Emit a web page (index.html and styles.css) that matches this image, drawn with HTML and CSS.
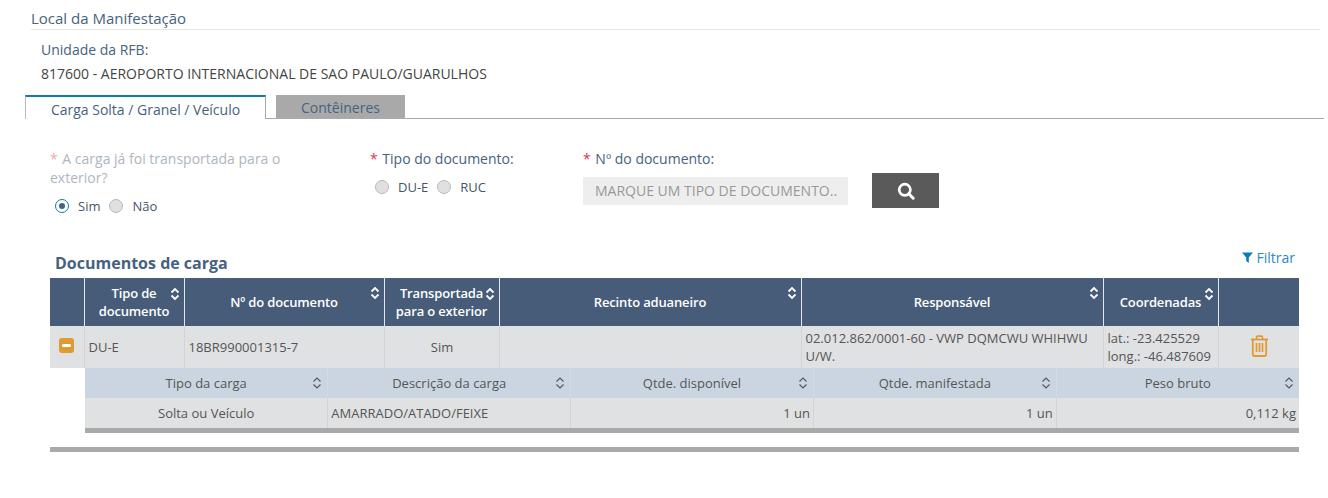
FILE: index.html
```html
<!DOCTYPE html>
<html lang="pt-BR">
<head>
<meta charset="utf-8">
<title>Local da Manifestação</title>
<link rel="stylesheet" href="styles.css">
</head>
<body>
<main class="page">
  <header class="section-title"><h2>Local da Manifestação</h2></header>
  <div class="unit">
    <div class="unit-label">Unidade da RFB:</div>
    <div class="unit-value">817600 - AEROPORTO INTERNACIONAL DE SAO PAULO/GUARULHOS</div>
  </div>
  <nav class="tabs">
    <span class="tab tab-active">Carga Solta / Granel / Veículo</span>
    <span class="tab tab-idle">Contêineres</span>
  </nav>
  <form class="form-row">
    <div class="field field-carga">
      <div class="label label-muted"><span class="req req-muted">*</span> A carga já foi transportada para o exterior?</div>
      <div class="radios radios-carga">
        <span class="radio radio-on"></span><span class="radio-text">Sim</span>
        <span class="radio"></span><span class="radio-text">Não</span>
      </div>
    </div>
    <div class="field field-tipo">
      <div class="label"><span class="req">*</span> Tipo do documento:</div>
      <div class="radios radios-tipo">
        <span class="radio"></span><span class="radio-text">DU-E</span>
        <span class="radio"></span><span class="radio-text">RUC</span>
      </div>
    </div>
    <div class="field field-num">
      <div class="label"><span class="req">*</span> Nº do documento:</div>
      <div class="fake-input">MARQUE UM TIPO DE DOCUMENTO..</div>
    </div>
    <button class="search-btn" type="button" aria-label="Pesquisar">
      <svg width="18" height="18" viewBox="0 0 18 18"><circle cx="7.8" cy="7.8" r="5.6" fill="none" stroke="#fff" stroke-width="2.7"/><path d="M11.8 11.8l4.4 4.4" stroke="#fff" stroke-width="3" stroke-linecap="round"/></svg>
    </button>
  </form>
  <section class="docs">
    <div class="docs-head">
      <h3>Documentos de carga</h3>
      <a class="filter"><svg width="11" height="11" viewBox="0 0 11 11"><path d="M0 .5h11L6.8 5.4V11L4.2 9V5.4z" fill="#0b7db4"/></svg>Filtrar</a>
    </div>
    <table class="main-table">
      <colgroup>
        <col class="c-exp"><col class="c-tipo"><col class="c-num"><col class="c-transp"><col class="c-wide"><col class="c-wide"><col class="c-coord"><col class="c-act">
      </colgroup>
      <thead>
        <tr>
          <th></th>
          <th><span class="th-text th-tipo">Tipo de documento</span><svg class="sort sort-h sort-a" viewBox="0 0 10 14"><path d="M1.5 5.5L5 2l3.5 3.5M1.5 8.5L5 12l3.5-3.5"/></svg></th>
          <th><span class="th-text">Nº do documento</span><svg class="sort sort-h sort-b" viewBox="0 0 10 14"><path d="M1.5 5.5L5 2l3.5 3.5M1.5 8.5L5 12l3.5-3.5"/></svg></th>
          <th><span class="th-text th-transp">Transportada para o exterior</span><svg class="sort sort-h sort-a" viewBox="0 0 10 14"><path d="M1.5 5.5L5 2l3.5 3.5M1.5 8.5L5 12l3.5-3.5"/></svg></th>
          <th><span class="th-text">Recinto aduaneiro</span><svg class="sort sort-h sort-b" viewBox="0 0 10 14"><path d="M1.5 5.5L5 2l3.5 3.5M1.5 8.5L5 12l3.5-3.5"/></svg></th>
          <th><span class="th-text">Responsável</span><svg class="sort sort-h sort-b" viewBox="0 0 10 14"><path d="M1.5 5.5L5 2l3.5 3.5M1.5 8.5L5 12l3.5-3.5"/></svg></th>
          <th><span class="th-text">Coordenadas</span><svg class="sort sort-h sort-a" viewBox="0 0 10 14"><path d="M1.5 5.5L5 2l3.5 3.5M1.5 8.5L5 12l3.5-3.5"/></svg></th>
          <th></th>
        </tr>
      </thead>
      <tbody>
        <tr class="data-row">
          <td class="cell-exp"><span class="minus"><i></i></span></td>
          <td>DU-E</td>
          <td>18BR990001315-7</td>
          <td class="center">Sim</td>
          <td></td>
          <td>02.012.862/0001-60 - VWP DQMCWU WHIHWU U/W.</td>
          <td>lat.: -23.425529<br>long.: -46.487609</td>
          <td class="center"><svg class="trash" width="19" height="22" viewBox="0 0 19 22" fill="none" stroke="#e09a32"><path d="M1 4.5h17" stroke-width="1.8"/><path d="M6.5 4V2.2c0-.7.4-1.1 1.1-1.1h3.8c.7 0 1.1.4 1.1 1.1V4" stroke-width="1.6"/><path d="M2.8 4.8v14.4c0 1 .7 1.8 1.7 1.8h10c1 0 1.7-.8 1.7-1.8V4.8" stroke-width="1.8"/><path d="M6.5 8v9M9.5 8v9M12.5 8v9" stroke-width="1.7"/></svg></td>
        </tr>
        <tr class="detail-row">
          <td class="detail-gap"></td>
          <td colspan="7" class="detail-cell">
            <table class="sub-table">
              <thead>
                <tr>
                  <th>Tipo da carga<svg class="sort sort-s" viewBox="0 0 10 14"><path d="M1.5 5.5L5 2l3.5 3.5M1.5 8.5L5 12l3.5-3.5"/></svg></th>
                  <th>Descrição da carga<svg class="sort sort-s" viewBox="0 0 10 14"><path d="M1.5 5.5L5 2l3.5 3.5M1.5 8.5L5 12l3.5-3.5"/></svg></th>
                  <th>Qtde. disponível<svg class="sort sort-s" viewBox="0 0 10 14"><path d="M1.5 5.5L5 2l3.5 3.5M1.5 8.5L5 12l3.5-3.5"/></svg></th>
                  <th>Qtde. manifestada<svg class="sort sort-s" viewBox="0 0 10 14"><path d="M1.5 5.5L5 2l3.5 3.5M1.5 8.5L5 12l3.5-3.5"/></svg></th>
                  <th>Peso bruto<svg class="sort sort-s" viewBox="0 0 10 14"><path d="M1.5 5.5L5 2l3.5 3.5M1.5 8.5L5 12l3.5-3.5"/></svg></th>
                </tr>
              </thead>
              <tbody>
                <tr>
                  <td class="center">Solta ou Veículo</td>
                  <td>AMARRADO/ATADO/FEIXE</td>
                  <td class="right">1 un</td>
                  <td class="right">1 un</td>
                  <td class="right">0,112 kg</td>
                </tr>
              </tbody>
            </table>
          </td>
        </tr>
      </tbody>
    </table>
    <div class="bottom-bar"></div>
  </section>
</main>
</body>
</html>
```
FILE: styles.css
```css
* { box-sizing: border-box; }
html, body { margin: 0; padding: 0; background: #fff; }
body { font-family: "Open Sans", "Liberation Sans", sans-serif; font-size: 14px; color: #444; height: 498px; overflow: hidden; }
.page { padding: 0 4px 0 25px; }

.section-title { margin: 0 4px 0 6px; height: 30px; border-bottom: 1px solid #e5e5e5; padding-top: 9px; }
.section-title h2 { margin: 0; font-size: 15px; font-weight: 400; line-height: 19px; color: #46627f; }

.unit { padding: 11px 0 0 16px; height: 65px; }
.unit-label { line-height: 18px; color: #46627f; }
.unit-value { line-height: 18px; margin-top: 6px; color: #444; }

.tabs { display: flex; height: 24px; border-bottom: 1px solid #aaa; }
.tab { display: block; }
.tab-active { width: 241px; height: 24px; border-top: 2px solid #0b7db4; border-left: 1px solid #bbb; border-right: 1px solid #aaa; background: #fff; text-align: center; line-height: 26px; font-size: 14px; color: #46627f; }
.tab-idle { width: 129px; height: 23px; margin-left: 10px; background: #a9a9a9; text-align: center; line-height: 25px; font-size: 14px; color: #46627f; }

.form-row { display: flex; align-items: flex-start; padding: 30px 0 0 25px; height: 120px; }
.field-carga { width: 320px; }
.field-tipo { width: 213px; }
.field-num { width: 289px; }
.label { font-size: 14px; line-height: 19px; color: #46627f; }
.label-muted { color: #aeb6c1; width: 260px; }
.req { color: #e8344a; margin-right: 1px; }
.req-muted { color: #f4a6b0; }
.radios { display: flex; align-items: center; }
.radios-carga { padding: 11px 0 0 5px; }
.radios-tipo { padding: 11px 0 0 5px; }
.radio { width: 14px; height: 14px; border-radius: 50%; background: #dfe0e2; border: 1px solid #b9b9b9; flex: none; position: relative; }
.radio-on { background: #fff; border-color: #0b7db4; }
.radio-on::after { content: ""; position: absolute; left: 3px; top: 3px; width: 6px; height: 6px; border-radius: 50%; background: #46627f; }
.radio-text { font-size: 13px; line-height: 16px; color: #45566a; margin: 0 9px 0 9px; }
.fake-input { margin-top: 9px; width: 265px; height: 28px; background: #eee; color: #999; font-size: 14px; line-height: 28px; padding-left: 12px; white-space: nowrap; overflow: hidden; }
.search-btn { width: 67px; height: 35px; margin-top: 24px; background: #5a5a5a; border: 0; padding: 1px 0 0; display: flex; align-items: center; justify-content: center; }

.docs { padding-left: 25px; width: 1274px; }
.docs-head { display: flex; justify-content: space-between; align-items: flex-start; height: 41px; margin-top: -2px; }
.docs-head h3 { margin: 15px 0 0 5px; font-size: 16px; line-height: 22px; font-weight: 700; color: #46627f; }
.filter { display: flex; align-items: center; gap: 3px; margin: 11px 4px 0 0; font-size: 14px; line-height: 19px; color: #2a8abf; }

table { border-collapse: collapse; border-spacing: 0; table-layout: fixed; }
.main-table { width: 1249px; }
.c-exp { width: 34px; }
.c-tipo { width: 100px; }
.c-num { width: 200px; }
.c-transp { width: 115px; }
.c-wide { width: 302px; }
.c-coord { width: 115px; }
.c-act { width: 81px; }
.main-table > thead th { height: 48px; padding: 0; background: #465c79; color: #fff; font-size: 13px; line-height: 18px; font-weight: 600; letter-spacing: -0.15px; text-align: center; position: relative; border-right: 1px solid #e3e6ea; }
.main-table > thead th:last-child { border-right: 0; }
.th-text { display: block; padding: 0 8px; }
.th-tipo { padding: 0 12px; }
.th-transp { padding: 0 4px; }
.sort { position: absolute; fill: none; }
.sort-h { width: 10px; height: 14px; right: 4px; stroke: #fff; stroke-width: 1.8; }
.sort-a { top: 9px; }
.sort-b { top: 8px; }
.sort-s { width: 10px; height: 14px; right: 5px; top: 8px; stroke: #555; stroke-width: 1.1; }

.data-row td { height: 42px; padding: 0 3px 0 4px; background: #e0e1e3; color: #555; font-size: 13px; line-height: 18px; border-right: 1px solid #d3d4d6; }
.data-row td:last-child { border-right: 0; }
.data-row .cell-exp { padding: 0 0 0 9px; }
.center { text-align: center; }
.right { text-align: right; }
.minus { display: flex; width: 15px; height: 15px; margin-top: -4px; border-radius: 3px; background: #e09a32; align-items: center; justify-content: center; }
.minus i { display: block; width: 9px; height: 3px; background: #fff; border-radius: 1px; }
.trash { display: block; margin: -3px auto 0; }

.detail-gap, .detail-cell { padding: 0; border: 0; background: #fff; }
.detail-cell { padding-left: 1px; }
.sub-table { width: 1214px; border-bottom: 5px solid #a9a9a9; }
.sub-table th { height: 30px; width: 20%; padding: 0 20px; background: #cbd5e1; color: #555; font-size: 13px; font-weight: 400; text-align: center; position: relative; border-right: 1px solid #d3dae4; }
.sub-table td { height: 32px; padding: 0 3px; background: #e0e1e3; color: #555; font-size: 13px; border-right: 1px solid #d3d4d6; }
.sub-table th:last-child, .sub-table td:last-child { border-right: 0; }

.bottom-bar { height: 5px; margin-top: 14px; background: #a9a9a9; width: 1249px; }
```
